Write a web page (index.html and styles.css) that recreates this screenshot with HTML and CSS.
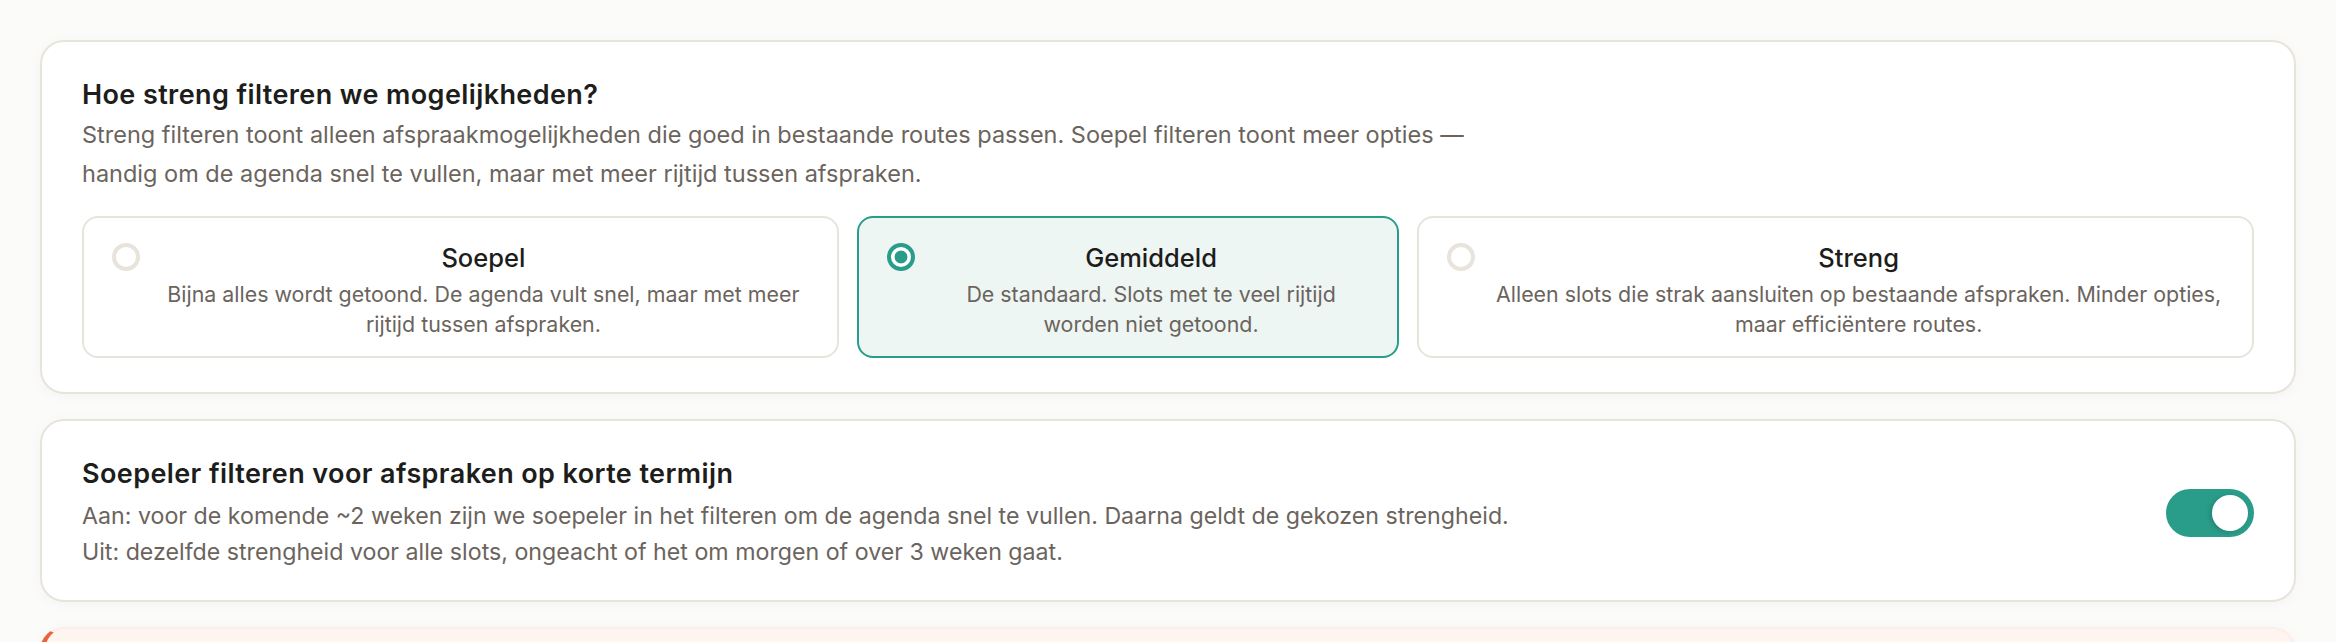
FILE: index.html
```html
<!DOCTYPE html>
<html lang="nl">
<head>
    <meta charset="UTF-8">
    <meta name="viewport" content="width=device-width, initial-scale=1.0">
    <title>Filterinstellingen</title>
    <link rel="stylesheet" href="styles.css">
</head>
<body>
    <main class="settings">
        <!-- Strengheid -->
        <section class="card">
            <h2 class="card-title">Hoe streng filteren we mogelijkheden?</h2>
            <p class="card-desc">Streng filteren toont alleen afspraakmogelijkheden die goed in bestaande routes passen. Soepel filteren toont meer opties — handig om de agenda snel te vullen, maar met meer rijtijd tussen afspraken.</p>

            <div class="options">
                <label class="option">
                    <span class="radio"></span>
                    <span class="option-body">
                        <span class="option-title">Soepel</span>
                        <span class="option-desc">Bijna alles wordt getoond. De agenda vult snel, maar met meer rijtijd tussen afspraken.</span>
                    </span>
                </label>
                <label class="option selected">
                    <span class="radio"></span>
                    <span class="option-body">
                        <span class="option-title">Gemiddeld</span>
                        <span class="option-desc">De standaard. Slots met te veel rijtijd worden niet getoond.</span>
                    </span>
                </label>
                <label class="option">
                    <span class="radio"></span>
                    <span class="option-body">
                        <span class="option-title">Streng</span>
                        <span class="option-desc">Alleen slots die strak aansluiten op bestaande afspraken. Minder opties, maar efficiëntere routes.</span>
                    </span>
                </label>
            </div>
        </section>

        <!-- Korte termijn -->
        <section class="card card-row">
            <div>
                <h2 class="card-title">Soepeler filteren voor afspraken op korte termijn</h2>
                <p class="card-desc wide">Aan: voor de komende ~2 weken zijn we soepeler in het filteren om de agenda snel te vullen. Daarna geldt de gekozen strengheid.<br>Uit: dezelfde strengheid voor alle slots, ongeacht of het om morgen of over 3 weken gaat.</p>
            </div>
            <button class="toggle on" aria-label="Soepeler filteren aan"><span class="knob"></span></button>
        </section>

        <section class="card notice"></section>
    </main>
</body>
</html>
```

FILE: styles.css
```css
body {
    margin: 0;
    background-color: #fbfbfa;
    font-family: Inter, "Noto Sans", sans-serif;
    color: #1d1d1b;
}
.settings {
    display: flex;
    flex-direction: column;
    gap: 25px;
    padding: 40px;
}
.card {
    background-color: #fff;
    border: 2px solid #e9e4db;
    border-radius: 24px;
    padding: 35px 40px 34px;
    box-shadow: 0 2px 14px rgba(0, 0, 0, 0.035);
}
.card-title {
    margin: 0;
    font-size: 27px;
    line-height: 36px;
    font-weight: 600;
    letter-spacing: 0.4px;
}
.card-desc {
    margin: 3px 0 0;
    max-width: 1400px;
    font-size: 23.5px;
    line-height: 38.5px;
    color: #6b645d;
}
.options {
    display: flex;
    gap: 18px;
    margin-top: 23px;
}
.option {
    flex: 1 1 auto;
    display: flex;
    gap: 18px;
    padding: 23px 28px 17px;
    border: 2px solid #e9e4db;
    border-radius: 16px;
    cursor: pointer;
}
.option.selected {
    background-color: #eef6f4;
    border-color: #2a9d8a;
}
.radio {
    flex: 0 0 28px;
    box-sizing: border-box;
    width: 28px;
    height: 28px;
    margin-top: 2px;
    border: 4.5px solid #e9e4db;
    border-radius: 50%;
    background-color: #fff;
}
.option.selected .radio {
    border-color: #2a9d8a;
    background: radial-gradient(circle, #2a9d8a 0 6px, #fff 6.8px);
}
.option-body {
    flex: 1;
    text-align: center;
}
.option-title {
    display: block;
    font-size: 25.5px;
    line-height: 33px;
    font-weight: 500;
}
.option-desc {
    display: block;
    margin-top: 5px;
    font-size: 21.4px;
    line-height: 30px;
    color: #6b645d;
}
.card-row {
    display: flex;
    align-items: center;
    justify-content: space-between;
    padding-bottom: 30px;
}
.card-row .card-title {
    margin-bottom: 6px;
}
.card-row .card-desc {
    font-size: 23.2px;
    line-height: 36px;
    max-width: none;
}
.toggle {
    position: relative;
    width: 88px;
    height: 48px;
    padding: 0;
    border: none;
    border-radius: 24px;
    background-color: #d9d4cc;
    cursor: pointer;
}
.toggle.on {
    background-color: #2a9d8a;
}
.knob {
    position: absolute;
    top: 6px;
    left: 6px;
    width: 36px;
    height: 36px;
    border-radius: 50%;
    background-color: #fff;
    box-shadow: -2px 1px 5px rgba(0, 0, 0, 0.18);
}
.toggle.on .knob {
    left: 46px;
}
.notice {
    min-height: 120px;
    background-color: #fef4f0;
    border-color: #fdeee8;
    border-left: 5px solid #e8643a;
}
```
